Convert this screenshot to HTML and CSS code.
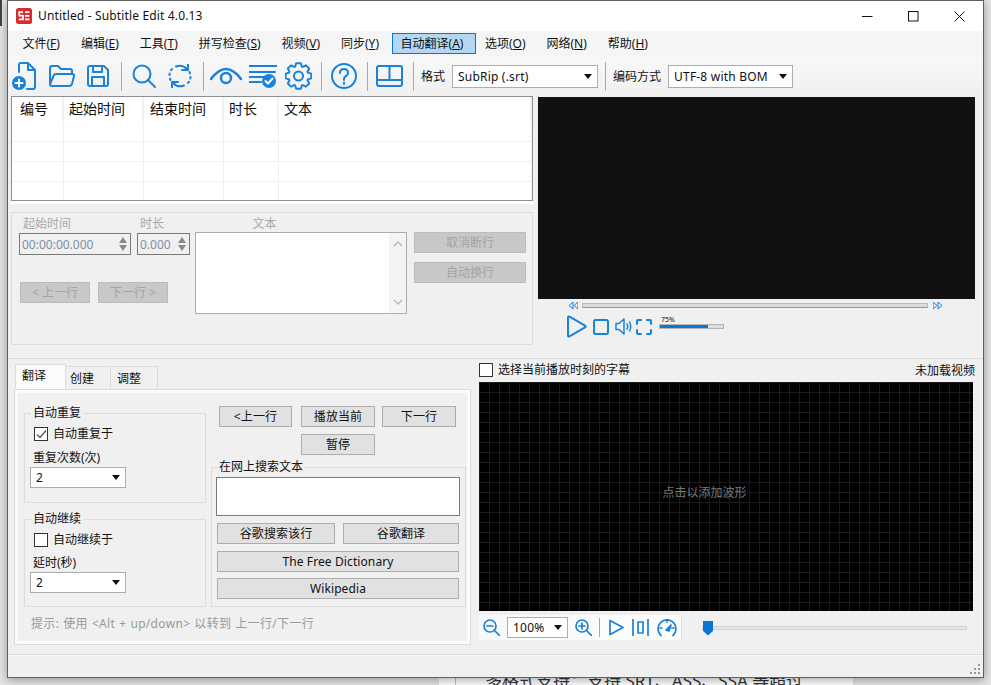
FILE: index.html
```html
<!DOCTYPE html>
<html lang="zh-CN">
<head>
<meta charset="utf-8">
<title>Untitled - Subtitle Edit 4.0.13</title>
<link rel="stylesheet" href="styles.css">
</head>
<body>
<div class="desk">
  <div class="bg-dark"></div>
  <div class="bg-page"><span class="bg-rule"></span><span class="bg-text">多格式支持：支持 SRT、ASS、SSA 等超过</span></div>

  <div class="window">
    <div class="titlebar">
      <svg class="logo" width="16" height="16" viewBox="0 0 16 16"><rect width="16" height="16" rx="2.500" fill="#d92b2b"/><path d="M7 4.200H3.200v3.400H7v3.800H2.800M9 4.200h4.400M9 7.800h4.400M9 11.400h4.400" fill="none" stroke="#fff" stroke-width="1.700"/></svg>
      <span class="title-text">Untitled - Subtitle Edit 4.0.13</span>
      <div class="winbtns">
        <svg width="11" height="11" viewBox="0 0 11 11"><path d="M0 5.500h10.500" stroke="#111" fill="none"/></svg>
        <svg width="11" height="11" viewBox="0 0 11 11"><rect x=".5" y=".5" width="9.500" height="9.500" stroke="#111" fill="none"/></svg>
        <svg width="11" height="11" viewBox="0 0 11 11"><path d="M.5.500l10 10M10.500.500l-10 10" stroke="#111" fill="none"/></svg>
      </div>
    </div>

    <div class="menubar">
      <span class="menu">文件(<u>F</u>)</span>
      <span class="menu">编辑(<u>E</u>)</span>
      <span class="menu">工具(<u>T</u>)</span>
      <span class="menu">拼写检查(<u>S</u>)</span>
      <span class="menu">视频(<u>V</u>)</span>
      <span class="menu">同步(<u>Y</u>)</span>
      <span class="menu active">自动翻译(<u>A</u>)</span>
      <span class="menu">选项(<u>O</u>)</span>
      <span class="menu">网络(<u>N</u>)</span>
      <span class="menu">帮助(<u>H</u>)</span>
    </div>

    <div class="toolbar">
      <svg class="ic m13" width="24" height="28" viewBox="0 0 24 28"><path d="M7 10V3q0-2 2-2h7l7 7v17q0 2-2 2h-6M16 1v7h7"/><circle cx="7" cy="21" r="7" fill="#1a82d9" stroke="none"/><path d="M7 17.500v7M3.500 21h7" stroke="#fff"/></svg>
      <svg class="ic m12" width="26" height="22" viewBox="0 0 26 22"><path d="M1 19V3q0-2 2-2h6l3 3h9q2 0 2 2v3M1 19q0 2 2 2h17q2 0 3-2l2-8q.5-2-1.500-2H7q-2 0-2.500 2z"/></svg>
      <svg class="ic m12" width="22" height="22" viewBox="0 0 22 22"><path d="M1 3q0-2 2-2h14l4 4v14q0 2-2 2H3q-2 0-2-2zM6 1v6h9V1M5 21v-9h12v9"/></svg>
      <span class="sep m10"></span>
      <svg class="ic m12" width="24" height="24" viewBox="0 0 24 24"><circle cx="10" cy="10" r="8.500"/><path d="M16 16l7 7"/></svg>
      <svg class="ic m11" width="24" height="24" viewBox="0 0 24 24"><path d="M8 2.500a10 10 0 0 1 11 2.500M16 21.500a10 10 0 0 1-11-2.500"/><path d="M14 6h6V0M10 18H4v6"/><path d="M2.500 16a10 10 0 0 1 1.500-11M21.500 8a10 10 0 0 1-1.500 11" stroke-dasharray="1.500 3.500"/></svg>
      <span class="sep m6"></span>
      <svg class="ic ic-eye m7" width="32" height="20" viewBox="0 0 32 20"><path d="M1 13Q16-7 31 13"/><circle cx="16" cy="12" r="5"/></svg>
      <svg class="ic m8" width="28" height="24" viewBox="0 0 28 24"><path d="M0 2h28M0 8h26M0 13h18M0 18h12"/><circle cx="20" cy="17" r="7" fill="#1a82d9" stroke="none"/><path d="M16.500 17l2.500 2.500 4.500-5" stroke="#fff"/></svg>
      <svg class="ic m9" width="27" height="28" viewBox="0 0 27 28"><g transform="translate(13.500 14)"><polygon points="9.400,-3.400 12.800,-2.300 12.800,2.300 9.400,3.400 9.060,4.230 10.650,7.460 7.460,10.650 4.230,9.060 3.400,9.400 2.300,12.800 -2.300,12.800 -3.400,9.400 -4.230,9.060 -7.460,10.650 -10.650,7.460 -9.060,4.230 -9.400,3.400 -12.800,2.300 -12.800,-2.300 -9.400,-3.400 -9.060,-4.230 -10.650,-7.460 -7.460,-10.650 -4.230,-9.060 -3.400,-9.400 -2.300,-12.800 2.300,-12.800 3.400,-9.400 4.230,-9.060 7.460,-10.650 10.650,-7.460 9.060,-4.230"/><circle r="4.500"/></g></svg>
      <span class="sep m9"></span>
      <svg class="ic m10" width="26" height="26" viewBox="0 0 26 26"><circle cx="13" cy="13" r="12"/><path d="M9 10q0-4 4-4t4 4q0 2-2 3t-2 3v1"/><path d="M13 19.500v1.500"/></svg>
      <span class="sep m8"></span>
      <svg class="ic m10" width="27" height="22" viewBox="0 0 27 22"><rect x="1" y="1" width="25" height="20" rx="2"/><path d="M1 15h25M13.500 1v14"/></svg>
      <span class="sep m7"></span>
      <span class="tb-label">格式</span>
      <div class="select sel-format"><span>SubRip (.srt)</span><i class="caret"></i></div>
      <span class="sep sep-b"></span>
      <span class="tb-label">编码方式</span>
      <div class="select sel-enc"><span>UTF-8 with BOM</span><i class="caret"></i></div>
    </div>

    <div class="top">
      <div class="top-left">
        <div class="listwrap">
          <div class="list">
            <div class="lrow lhead"><span class="c1">编号</span><span class="c2">起始时间</span><span class="c3">结束时间</span><span class="c4">时长</span><span class="c5">文本</span></div>
            <div class="lrow lr1"><span class="c1"></span><span class="c2"></span><span class="c3"></span><span class="c4"></span><span class="c5"></span></div>
            <div class="lrow"><span class="c1"></span><span class="c2"></span><span class="c3"></span><span class="c4"></span><span class="c5"></span></div>
            <div class="lrow"><span class="c1"></span><span class="c2"></span><span class="c3"></span><span class="c4"></span><span class="c5"></span></div>
            <div class="lrow"><span class="c1"></span><span class="c2"></span><span class="c3"></span><span class="c4"></span><span class="c5"></span></div>
          </div>
        </div>
        <div class="edit">
          <div class="edit-left">
            <div class="fields">
              <div class="f-start"><div class="lab">起始时间</div><div class="spin"><span class="num">00:00:00.000</span><i class="spinner"></i></div></div>
              <div class="f-dur"><div class="lab">时长</div><div class="spin"><span class="num">0.000</span><i class="spinner"></i></div></div>
            </div>
            <div class="navrow"><span class="dbtn">&lt; 上一行</span><span class="dbtn">下一行 &gt;</span></div>
          </div>
          <div class="edit-text">
            <div class="lab lab-c">文本</div>
            <div class="textbox"><div class="scroll"><svg width="10" height="7" viewBox="0 0 10 7"><path d="M1 6l4-4 4 4" fill="none" stroke="#bbb" stroke-width="1.500"/></svg><svg width="10" height="7" viewBox="0 0 10 7"><path d="M1 1l4 4 4-4" fill="none" stroke="#bbb" stroke-width="1.500"/></svg></div></div>
          </div>
          <div class="edit-btns"><span class="dbtn wide">取消断行</span><span class="dbtn wide">自动换行</span></div>
        </div>
      </div>
      <div class="top-right">
        <div class="video"></div>
        <div class="seek">
          <svg class="seek-ic" width="9" height="7" viewBox="0 0 9 7"><path d="M4 0v7L0 3.500zM9 0v7L5 3.500z" fill="none" stroke="#1a82d9"/></svg>
          <div class="seekbar"></div>
          <svg class="seek-ic" width="9" height="7" viewBox="0 0 9 7"><path d="M0 0v7l4-3.500zM5 0v7l4-3.500z" fill="none" stroke="#1a82d9"/></svg>
        </div>
        <div class="player">
          <svg class="ic" width="21" height="23" viewBox="0 0 21 23"><path d="M2 2.500q0-1.500 1.500-.8l15.500 9q1.500.8 0 1.600l-15.500 9q-1.500.7-1.500-.8z"/></svg>
          <svg class="ic" width="16" height="16" viewBox="0 0 16 16"><rect x="1" y="1" width="14" height="14" rx="1.500"/></svg>
          <svg class="ic ic-thin" width="17" height="17" viewBox="0 0 17 17"><path d="M1 5.500h3l5-4.500v15l-5-4.500H1zM12 6q1.500 2.500 0 5M14.500 4q2.500 4.500 0 9"/></svg>
          <svg class="ic" width="16" height="16" viewBox="0 0 16 16"><path d="M1 5V2q0-1 1-1h3M11 1h3q1 0 1 1v3M15 11v3q0 1-1 1h-3M5 15H2q-1 0-1-1v-3"/></svg>
          <div class="vol"><span class="vol-t">75%</span><div class="vol-bar"><div class="vol-fill"></div></div></div>
        </div>
      </div>
    </div>

    <div class="bottom">
      <div class="b-left">
        <div class="tabs"><span class="tab on">翻译</span><span class="tab t2">创建</span><span class="tab t3">调整</span></div>
        <div class="tabpanel">
          <div class="tp-grid">
            <div class="tp-col1">
              <fieldset class="gb gb1">
                <legend>自动重复</legend>
                <label class="chk"><i class="box"><svg width="11" height="11" viewBox="0 0 11 11"><path d="M1 5.500l3 3 6-7" fill="none" stroke="#555" stroke-width="1.200"/></svg></i>自动重复于</label>
                <div class="flab">重复次数(次)</div>
                <div class="select sel-n"><span>2</span><i class="caret"></i></div>
              </fieldset>
              <fieldset class="gb gb2">
                <legend>自动继续</legend>
                <label class="chk"><i class="box"></i>自动继续于</label>
                <div class="flab">延时(秒)</div>
                <div class="select sel-n"><span>2</span><i class="caret"></i></div>
              </fieldset>
            </div>
            <div class="tp-col2">
              <div class="btnrow"><span class="btn b73">&lt;上一行</span><span class="btn b74">播放当前</span><span class="btn b74 ml7">下一行</span></div>
              <div class="btnrow2"><span class="btn b74">暂停</span></div>
              <fieldset class="gb gb3">
                <legend>在网上搜索文本</legend>
                <div class="searchbox"></div>
                <div class="sbtns"><span class="btn b118">谷歌搜索该行</span><span class="btn b116">谷歌翻译</span></div>
                <span class="btn full">The Free Dictionary</span>
                <span class="btn full">Wikipedia</span>
              </fieldset>
            </div>
          </div>
          <div class="hint">提示: 使用 &lt;Alt + up/down&gt; 以转到 上一行/下一行</div>
        </div>
      </div>
      <div class="b-right">
        <div class="wavehead"><label class="chk chk-w"><i class="box"></i>选择当前播放时刻的字幕</label><span>未加载视频</span></div>
        <div class="wave"><span>点击以添加波形</span></div>
        <div class="wavebar">
          <div class="wb-tools">
            <svg class="ic ic-m" width="17" height="17" viewBox="0 0 17 17"><circle cx="7" cy="7" r="6"/><path d="M11.500 11.500l5 5M4 7h6"/></svg>
            <div class="select sel-zoom"><span>100%</span><i class="caret"></i></div>
            <svg class="ic ic-m" width="17" height="17" viewBox="0 0 17 17"><circle cx="7" cy="7" r="6"/><path d="M11.500 11.500l5 5M4 7h6M7 4v6"/></svg>
            <span class="sep sep-z"></span>
            <svg class="ic ic-m" width="15" height="17" viewBox="0 0 15 17"><path d="M1 1.500v14L14 8.500z"/></svg>
            <svg class="ic ic-m" width="17" height="17" viewBox="0 0 17 17"><path d="M1 0v17M16 0v17M6 3h5v11H6z"/></svg>
            <svg class="ic ic-m" width="20" height="18" viewBox="0 0 20 18"><path d="M4 16.500a9 9 0 1 1 12 0M3 9h2M10 1v2M17 9h-2"/><path d="M9 11l5-5-2 6z" fill="#1a82d9"/></svg>
          </div>
          <div class="wb-slider"><i class="thumb"></i></div>
        </div>
      </div>
    </div>

    <div class="status"><svg class="grip" width="11" height="11" viewBox="0 0 11 11"><path d="M8 0h2v2H8zM4 4h2v2H4zM8 4h2v2H8zM0 8h2v2H0zM4 8h2v2H4zM8 8h2v2H8z" fill="#999"/></svg></div>
  </div>
</div>
</body>
</html>
```

FILE: styles.css
```css
* { box-sizing: border-box; }
html, body { margin: 0; padding: 0; }
body {
  font-family: "Noto Sans", "Noto Sans CJK SC", sans-serif;
  font-size: 12px;
  color: #111;
}
.desk { position: relative; width: 991px; height: 685px; overflow: hidden; background: #e4e4e4; }
.bg-dark { position: absolute; left: 0; top: 0; width: 2px; height: 26px; background: #444; }
.bg-page { position: absolute; left: 439px; width: 414px; top: 660px; height: 25px; background: #fff; }
.bg-rule { position: absolute; left: 16px; top: 0; width: 1px; height: 25px; background: #a9c6e6; }
.bg-text { position: absolute; left: 46px; top: 9px; font-size: 17px; line-height: 24px; color: #333; white-space: nowrap; }

.window {
  position: absolute; left: 7px; top: 0; width: 977px; height: 678px;
  background: #f0f0f0; border: 1px solid #5f5f5f;
  box-shadow: 0 2px 9px rgba(0,0,0,.35);
  display: flex; flex-direction: column;
}
.titlebar { height: 30px; background: #fff; display: flex; align-items: center; flex: none; padding-left: 8px; }
.logo { flex: none; }
.title-text { margin-left: 6px; letter-spacing: .15px; line-height: 30px; }
.winbtns { margin-left: auto; display: flex; gap: 35px; padding-right: 18px; }
.menubar { height: 25px; background: #f5f5f5; flex: none; display: flex; align-items: center; padding-left: 4px; }
.menu { padding: 0 10.500px; height: 21px; line-height: 21px; white-space: nowrap; }
.menu.active { padding: 0 12px 0 8px; margin: 0 -2px 0 2px; background: #b3d7f3; border: 1px solid #0078d7; line-height: 19px; }
.toolbar {
  height: 40px; flex: none; display: flex; align-items: center; padding-left: 4px;
  background: linear-gradient(#f8f8f8, #f0f0f0);
}
.ic { fill: none; stroke: #1a82d9; stroke-width: 2; stroke-linejoin: round; stroke-linecap: round; flex: none; }
.ic-eye { stroke-width: 2.500; }
.ic-thin { stroke-width: 1.500; }
.ic-m { stroke-width: 1.700; }
.m6 { margin-right: 6px; } .m7 { margin-right: 7px; } .m8 { margin-right: 8px; } .m9 { margin-right: 9px; }
.m10 { margin-right: 10px; } .m11 { margin-right: 11px; } .m12 { margin-right: 12px; } .m13 { margin-right: 13px; }
.sep { width: 1px; height: 29px; background: #a8a8a8; flex: none; }
.sep-b { margin: 0 7px; }
.tb-label { white-space: nowrap; margin-right: 7px; }
.select {
  background: #fff; border: 1px solid #adadad; display: flex; align-items: center; justify-content: space-between;
  height: 23px; padding: 0 5px; flex: none; letter-spacing: .2px;
}
.caret { width: 0; height: 0; border-left: 4.500px solid transparent; border-right: 4.500px solid transparent; border-top: 5px solid #111; }
.sel-format { width: 146px; }
.sel-enc { width: 125px; }

.top { height: 263px; flex: none; display: flex; padding-left: 3px; gap: 5px; border-bottom: 1px solid #dcdcdc; }
.top-left { width: 522px; flex: none; }
.listwrap { height: 108px; background: #fff; }
.list { height: 105px; background: #fff; border: 1px solid #8a8f98; display: flex; flex-direction: column; }
.lrow { display: flex; height: 20px; border-bottom: 1px solid #f0f0f0; flex: none; }
.lrow:last-child { border-bottom: 0; flex: 1; }
.lrow span { border-right: 1px solid #f0f0f0; display: block; flex: none; }
.lrow .c1 { width: 52px; } .lrow .c2 { width: 80px; } .lrow .c3 { width: 80px; } .lrow .c4 { width: 55px; }
.lrow .c5 { width: 253px; }
.lhead { height: 25px; font-size: 14px; line-height: 24px; border-bottom: 0; }
.lhead span { border-right: 2px solid #f0f0f0; }
.lhead .c1 { padding-left: 8px; }
.lhead .c2 { padding-left: 5px; }
.lhead .c3 { padding-left: 6px; }
.lhead .c4 { padding-left: 5px; }
.lhead .c5 { padding-left: 5px; }
.lr1 { height: 20px; }

.edit { margin-top: 8px; height: 133px; border: 1px solid #dcdcdc; display: flex; padding: 3px 0 0 7px; color: #a9a9a9; }
.edit-left { width: 171px; flex: none; margin-right: 5px; }
.fields { display: flex; gap: 6px; }
.lab { line-height: 15px; height: 15px; padding-left: 4px; color: #a9a9a9; }
.f-dur .lab { padding-left: 3px; }
.lab-c { text-align: center; padding-right: 77px; }
.f-start { width: 112px; } .f-dur { width: 53px; }
.spin { margin-top: 2px; height: 22px; border: 1px solid #7a7a7a; display: flex; align-items: center; justify-content: space-between; padding: 0 3px 0 2px; color: #7f8fa8; }
.spinner { width: 8px; height: 16px; position: relative; flex: none; }
.spinner::before, .spinner::after { content: ""; position: absolute; left: 0; border-left: 4px solid transparent; border-right: 4px solid transparent; }
.spinner::before { top: 1px; border-bottom: 6px solid #8a8a8a; }
.spinner::after { bottom: 1px; border-top: 6px solid #8a8a8a; }
.navrow { margin: 27px 0 0 1px; display: flex; gap: 8px; }
.dbtn { display: block; height: 21px; line-height: 19px; width: 70px; text-align: center; background: #c8c8c8; border: 1px solid #bcbcbc; color: #a4a4a4; }
.edit-text { width: 212px; flex: none; margin-right: 7px; }
.textbox { margin-top: 1px; height: 82px; background: #fff; border: 1px solid #adadad; display: flex; justify-content: flex-end; }
.scroll { width: 17px; background: #f4f4f4; display: flex; flex-direction: column; justify-content: space-between; align-items: center; padding: 7px 0; }
.edit-btns { padding-top: 16px; display: flex; flex-direction: column; gap: 9px; }
.dbtn.wide { width: 112px; }

.top-right { width: 437px; flex: none; padding-top: 1px; }
.video { height: 202px; background: #111; }
.seek { display: flex; align-items: center; height: 12px; padding: 0 33px 0 31px; margin-top: 0; }
.seek-ic { flex: none; }
.seekbar { margin: 0 5px 0 4px; flex: 1; height: 5px; background: #dcdcdc; border: 1px solid #bbb; border-bottom-color: #999; }
.player { display: flex; align-items: center; gap: 6px; padding-left: 28px; margin-top: 4px; height: 23px; }
.player svg:nth-child(3) { margin-right: -2px; }
.vol { margin-left: 1px; width: 65px; align-self: flex-start; }
.vol-t { display: block; font-size: 7px; line-height: 8px; height: 8px; padding-left: 2px; margin-top: 1px; }
.vol-bar { height: 5px; margin-top: 0; background: #dcdcdc; border: 1px solid #b5b5b5; }
.vol-fill { width: 48px; height: 3px; background: #0a78d2; }

.bottom { height: 295px; flex: none; display: flex; padding: 5px 0 0 6px; }
.b-left { width: 457px; flex: none; }
.tabs { display: flex; height: 25px; align-items: flex-end; padding-left: 1px; }
.tab { width: 45px; height: 23px; line-height: 24px; padding-left: 4px; border: 1px solid #dcdcdc; border-bottom: 0; border-left: 0; background: #f0f0f0; }
.tab.t3 { width: 47px; padding-left: 6px; }
.tab.on { width: 51px; height: 25px; background: #fbfbfb; border-left: 1px solid #dcdcdc; line-height: 22px; padding-left: 6px; }
.tabpanel { height: 256px; border: 1px solid #dcdcdc; outline: 3px solid #fbfbfb; outline-offset: -4px; background: #f0f0f0; padding: 16px 5px 0 9px; }
.tp-grid { display: flex; gap: 5px; }
.tp-col1 { width: 182px; flex: none; display: flex; flex-direction: column; gap: 9px; }
.tp-col2 { width: 255px; flex: none; }
.gb { margin: 0; border: 1px solid #dcdcdc; padding: 0; min-width: 0; }
.gb legend { margin-left: 0; padding: 0 2px; font-size: 12px; line-height: 14px; }
.gb3 legend { margin-left: 1px; }
.gb1 { height: 97px; padding: 7px 0 0 6px; }
.gb2 { height: 95px; padding: 7px 0 0 6px; }
.chk { display: flex; align-items: center; line-height: 14px; height: 14px; padding-left: 3px; }
.box { width: 14px; height: 14px; background: #fff; border: 1px solid #333; margin-right: 5px; display: block; flex: none; }
.box svg { display: block; margin: 1px; }
.flab { margin: 10px 0 0 2px; line-height: 14px; }
.gb2 .flab { margin-top: 9px; }
.sel-n { width: 96px; height: 21px; margin: 2px 0 0 -1px; }
.btnrow { display: flex; gap: 9px; padding-left: 8px; }
.btn { display: block; height: 21px; line-height: 19px; text-align: center; background: #e1e1e1; border: 1px solid #adadad; white-space: nowrap; letter-spacing: .1px; }
.b73 { width: 73px; } .b74 { width: 74px; } .ml7 { margin-left: -2px; }
.btnrow2 { margin: 7px 0 5px 90px; }
.gb3 { height: 147px; padding: 3px 5px 0 4px; }
.searchbox { height: 39px; width: 244px; background: #fff; border: 1px solid #7a7a7a; }
.sbtns { display: flex; gap: 8px; margin: 7px 0 7px 1px; }
.b118 { width: 118px; } .b116 { width: 116px; }
.btn.full { width: 242px; margin: 0 0 6px 1px; }
.hint { margin: 10px 0 0 7px; color: #999; line-height: 14px; letter-spacing: .32px; word-spacing: .6px; }

.b-right { width: 496px; flex: none; margin-left: 8px; }
.wavehead { display: flex; justify-content: space-between; align-items: center; height: 18px; margin-top: -3px; }
.chk-w { padding-left: 0; }
.wave {
  margin-top: 3px; width: 494px; height: 229px; background-color: #000;
  background-image: linear-gradient(#1b1b1b 1px, transparent 1px), linear-gradient(90deg, #1b1b1b 1px, transparent 1px);
  background-size: 10px 10px;
  display: flex; align-items: center; justify-content: center; color: #777;
  padding: 0 43px 10px 0;
}
.wavebar { display: flex; align-items: center; height: 25px; margin-top: 4px; }
.wb-tools { width: 203px; height: 25px; flex: none; display: flex; align-items: center; background: linear-gradient(90deg, #f9f9f9, #fcfcfc); padding-left: 4px; border-right: 1px solid #ddd; }
.sel-zoom { width: 61px; height: 21px; margin: 0 7px; }
.sep-z { height: 19px; margin: 0 9px 0 7px; }
.wb-tools svg:nth-of-type(4) { margin: 0 8px; }
.wb-slider { position: relative; margin-left: 20px; width: 265px; height: 4px; background: #e2e6e6; border: 1px solid #d0d4d4; }
.thumb { position: absolute; left: 0; top: -6px; width: 10px; height: 15px; background: #0a78d2; clip-path: polygon(0 0, 100% 0, 100% 70%, 50% 100%, 0 70%); }

.status { flex: 1; border-top: 1px solid #dcdcdc; margin-top: 0; box-shadow: inset 0 1px 0 #f8f8f8; display: flex; justify-content: flex-end; align-items: flex-end; padding: 0 2px 2px 0; }
```
